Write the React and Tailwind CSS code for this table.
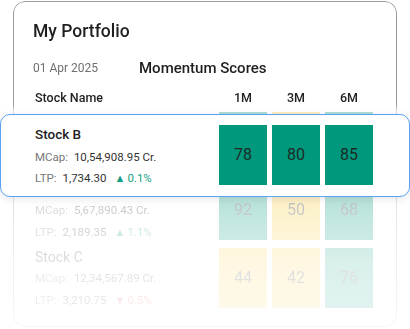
import React from 'react';

const GREEN = 'bg-[#00987c]';
const YELLOW = 'bg-[#f8c93a]';

const featured = {
    name: 'Stock B', mcap: '10,54,908.95 Cr.', ltp: '1,734.30', change: '0.1%', up: true,
    scores: [[78, GREEN], [80, GREEN], [85, GREEN]],
};

// first entry sits under the lifted card, so only its cells peek out
const stocks = [
    { name: 'Stock B', mcap: '10,54,908.95 Cr.', ltp: '1,734.30', change: '0.1%', up: true, covered: true, scores: [[78, GREEN], [55, YELLOW], [85, GREEN]] },
    { name: 'Stock A', mcap: '5,67,890.43 Cr.', ltp: '2,189.35', change: '1.1%', up: true, scores: [[92, GREEN], [50, YELLOW], [68, GREEN]] },
    { name: 'Stock C', mcap: '12,34,567.89 Cr.', ltp: '3,210.75', change: '0.5%', up: false, scores: [[44, YELLOW], [42, YELLOW], [76, GREEN]] },
];

const Change = ({ up, value }) => (
    <span className={`ml-[8px] ${up ? 'text-[#16a085]' : 'text-[#e05252]'}`}>
        <span className="text-[11px] mr-[2px]">{up ? '▲' : '▼'}</span>
        {value}
    </span>
);

const ScoreCells = ({ scores, hideText }) => (
    <div className="flex gap-[5px]">
        {scores.map(([score, color], i) => (
            <div key={i} className={`w-[48px] h-[60px] flex items-center justify-center text-[16px] text-[#1d2b27] ${color}`}>
                {!hideText && score}
            </div>
        ))}
    </div>
);

const StockRow = ({ stock }) => (
    <div className="flex items-start">
        <div className="flex-1 h-[60px]">
            {!stock.covered && (
                <>
                    <p className="text-[14px] leading-[18px] text-[#222]">{stock.name}</p>
                    <p className="text-[11.5px] leading-[24px] text-[#333]"><span className="text-[#777] mr-[3px]">MCap:</span> {stock.mcap}</p>
                    <p className="text-[11.5px] leading-[20px] text-[#333]">
                        <span className="text-[#777] mr-[3px]">LTP:</span> {stock.ltp}
                        <Change up={stock.up} value={stock.change} />
                    </p>
                </>
            )}
        </div>
        <ScoreCells scores={stock.scores} hideText={stock.covered} />
    </div>
);

export default function App() {
    return (
        <div className="relative w-[410px] h-[329px] bg-white font-['Roboto',sans-serif] overflow-hidden">
            <div className="mx-[13px] mt-px h-[326px] border border-[#9c9c9c] rounded-[12px] pl-[21px] pr-[23px] pt-[17px] [mask-image:linear-gradient(to_bottom,#000_104px,rgba(0,0,0,0.32)_110px,rgba(0,0,0,0.28)_200px,rgba(0,0,0,0.15)_260px,rgba(0,0,0,0.1)_326px)]">
                <h1 className="text-[17.5px] leading-[24px] font-medium text-[#1f1f1f] -ml-[2px]">My Portfolio</h1>
                <div className="flex items-center mt-[15px] h-[20px]">
                    <span className="w-[106px] text-[12px] text-[#707070] -ml-[2px]">01 Apr 2025</span>
                    <span className="text-[15px] font-medium text-[#1f1f1f]">Momentum Scores</span>
                </div>
                <div className="flex items-center mt-[12px] h-[16px] text-[12.5px] font-medium text-[#222]">
                    <span className="flex-1">Stock Name</span>
                    <div className="flex gap-[5px]">
                        <span className="w-[48px] text-center">1M</span>
                        <span className="w-[48px] text-center">3M</span>
                        <span className="w-[48px] text-center">6M</span>
                    </div>
                </div>
                <div className="mt-[6px] flex flex-col gap-[8px]">
                    {stocks.map(s => <StockRow key={s.name + s.mcap} stock={s} />)}
                </div>
            </div>

            {/* selected row lifted above the list */}
            <div className="absolute left-0 top-[114px] w-[410px] h-[83px] bg-white border border-[#5ca3f3] rounded-[10px] shadow-[0_2px_8px_rgba(0,0,0,0.1)] pl-[34px] pr-[36px] pt-[10px] flex items-start">
                <div className="flex-1">
                    <p className="text-[13.5px] leading-[18px] font-medium text-[#222]">{featured.name}</p>
                    <p className="mt-[3px] text-[11.5px] leading-[22px] text-[#333]"><span className="text-[#777] mr-[3px]">MCap:</span> {featured.mcap}</p>
                    <p className="text-[11.5px] leading-[20px] text-[#333]">
                        <span className="text-[#777] mr-[3px]">LTP:</span> {featured.ltp}
                        <Change up={featured.up} value={featured.change} />
                    </p>
                </div>
                <ScoreCells scores={featured.scores} />
            </div>
        </div>
    );
}
